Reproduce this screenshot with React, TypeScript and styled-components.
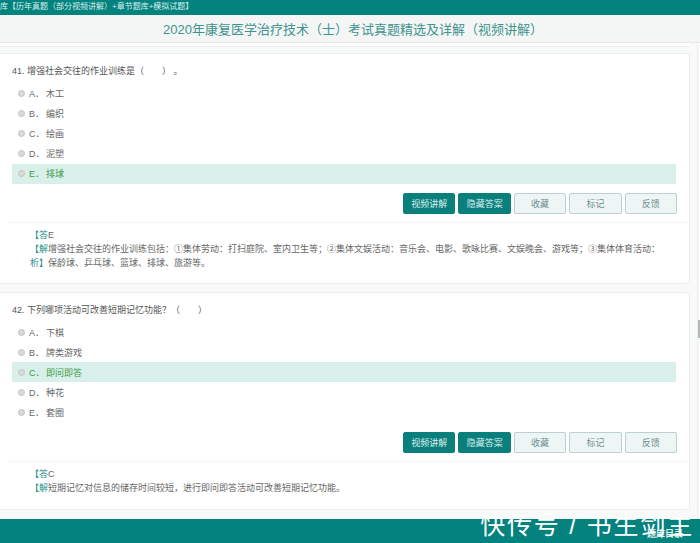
import styled, { createGlobalStyle } from "styled-components";

const questions = [
  {
    title: "41. 增强社会交往的作业训练是（　　） 。",
    options: [
      ["A．", "木工"],
      ["B．", "编织"],
      ["C．", "绘画"],
      ["D．", "泥塑"],
      ["E．", "排球"],
    ],
    correct: 4,
    answer: "E",
    analysisTag: "【解析】",
    analysis:
      "增强社会交往的作业训练包括：①集体劳动：打扫庭院、室内卫生等；②集体文娱活动：音乐会、电影、歌咏比赛、文娱晚会、游戏等；③集体体育活动：保龄球、乒乓球、篮球、排球、旅游等。",
  },
  {
    title: "42. 下列哪项活动可改善短期记忆功能？（　　）",
    options: [
      ["A．", "下棋"],
      ["B．", "牌类游戏"],
      ["C．", "即问即答"],
      ["D．", "种花"],
      ["E．", "套圈"],
    ],
    correct: 2,
    answer: "C",
    analysisTag: "【解",
    analysis: "短期记忆对信息的储存时间较短，进行即问即答活动可改善短期记忆功能。",
  },
];

const GlobalStyle = createGlobalStyle`
  html, body {
    margin: 0;
    padding: 0;
    height: 543px;
    overflow: hidden;
    background: #f8f9f9;
    font-family: "Liberation Sans", "Noto Sans CJK SC", sans-serif;
  }
`;

const Page = styled.div`
  position: relative;
  width: 700px;
  height: 543px;
  display: flex;
  flex-direction: column;
  overflow: hidden;
`;

const TopBar = styled.div`
  height: 15px;
  flex: none;
  background: #04827e;
  color: #d9efec;
  font-size: 8px;
  line-height: 13px;
  white-space: nowrap;
  overflow: hidden;
`;

const TitleBar = styled.h1`
  margin: 0;
  height: 28px;
  flex: none;
  box-sizing: border-box;
  background: #f4f6f6;
  border-bottom: 1px solid #e6e8e8;
  color: #3f9390;
  font-size: 13px;
  font-weight: 400;
  line-height: 29px;
  text-align: center;
  padding-left: 6px;
`;

const Body = styled.div`
  flex: 1;
  min-height: 0;
  display: flex;
`;

const Main = styled.div`
  width: 690px;
  flex: none;
  display: flex;
  flex-direction: column;
`;

const PreviousCardEnd = styled.div`
  height: 3px;
  flex: none;
  background: #fff;
  border-bottom: 1px solid #eceeee;
  margin-bottom: 6px;
`;

const CardList = styled.div`
  display: flex;
  flex-direction: column;
  gap: 8px;
`;

const ScrollTrack = styled.div`
  width: 3px;
  margin-left: 7px;
  flex: none;
  position: relative;
  background: #fbfbfb;
  border-left: 1px solid #eeeeee;
  box-sizing: border-box;
`;

const Thumb = styled.div`
  position: absolute;
  right: 0;
  top: 277px;
  width: 2px;
  height: 18px;
  background: #b4b8b8;
`;

const Card = styled.section<{ $height: number }>`
  height: ${(p) => p.$height}px;
  flex: none;
  box-sizing: border-box;
  background: #fff;
  border: 1px solid #eceeee;
  border-left: none;
  border-radius: 0 3px 3px 0;
  display: flex;
  flex-direction: column;
`;

const Question = styled.div`
  height: 29.5px;
  padding: 10px 0 0 12px;
  box-sizing: border-box;
  font-size: 9px;
  line-height: 15px;
  color: #555;
  flex: none;
`;

const Options = styled.div`
  display: flex;
  flex-direction: column;
  margin: 0 13px 0 12px;
  flex: none;
`;

const Option = styled.div<{ $correct: boolean }>`
  height: 20px;
  display: flex;
  align-items: center;
  padding-left: 6px;
  font-size: 9px;
  color: ${(p) => (p.$correct ? "#3e9a48" : "#666")};
  background: ${(p) => (p.$correct ? "#d9f0ea" : "transparent")};
`;

const Radio = styled.span`
  width: 7px;
  height: 7px;
  margin-right: 4px;
  flex: none;
  box-sizing: border-box;
  border-radius: 50%;
  background: #d8dada;
  border: 1px solid #c2c5c5;
`;

const OptionKey = styled.span`
  width: 17px;
  flex: none;
`;

const Actions = styled.div`
  display: flex;
  justify-content: flex-end;
  gap: 3px;
  padding: 9.5px 12px 8px 0;
  border-bottom: 1px solid #f4f5f5;
  margin-left: 8px;
  flex: none;
`;

const ActionButton = styled.button<{ $primary?: boolean }>`
  width: 52.4px;
  height: 21px;
  padding: 0;
  box-sizing: border-box;
  border-radius: 2px;
  font: inherit;
  font-size: 9px;
  border: 1px solid ${(p) => (p.$primary ? "#0b7f7c" : "#bcd1cf")};
  background: ${(p) => (p.$primary ? "#0b7f7c" : "#eef6f5")};
  color: ${(p) => (p.$primary ? "#d8eeec" : "#6f8f8d")};
`;

const Solution = styled.div`
  padding: 5px 25px 0 30px;
  font-size: 9px;
  line-height: 14px;
  color: #666;
`;

const Answer = styled.div``;

const Tag = styled.span`
  color: #1f8f8c;
`;

const Analysis = styled.div`
  display: grid;
  grid-template-columns: 18px 1fr;
`;

const Footer = styled.footer`
  height: 24px;
  flex: none;
  background: #04827e;
`;

const FooterLink = styled.span`
  position: absolute;
  right: 17px;
  bottom: 3px;
  color: #e4f4f2;
  font-size: 9px;
  font-weight: 700;
`;

const Watermark = styled.div`
  position: absolute;
  right: 6px;
  bottom: 3px;
  color: #fff;
  font-size: 25px;
  line-height: 30px;
  letter-spacing: 1.8px;
  white-space: nowrap;
`;

const App = () => {
  return (
    <Page>
      <GlobalStyle />
      <TopBar>库【历年真题（部分视频讲解）+章节题库+模拟试题】</TopBar>
      <TitleBar>2020年康复医学治疗技术（士）考试真题精选及详解（视频讲解）</TitleBar>
      <Body>
        <Main>
          <PreviousCardEnd />
          <CardList>
            {questions.map((q, i) => (
              <Card key={q.title} $height={i === 0 ? 230.6 : 218}>
                <Question>{q.title}</Question>
                <Options>
                  {q.options.map(([key, text], index) => (
                    <Option key={key} $correct={index === q.correct}>
                      <Radio />
                      <OptionKey>{key}</OptionKey>
                      {text}
                    </Option>
                  ))}
                </Options>
                <Actions>
                  <ActionButton $primary>视频讲解</ActionButton>
                  <ActionButton $primary>隐藏答案</ActionButton>
                  <ActionButton>收藏</ActionButton>
                  <ActionButton>标记</ActionButton>
                  <ActionButton>反馈</ActionButton>
                </Actions>
                <Solution>
                  <Answer>
                    <Tag>【答</Tag>
                    {q.answer}
                  </Answer>
                  <Analysis>
                    <Tag>{q.analysisTag}</Tag>
                    <span>{q.analysis}</span>
                  </Analysis>
                </Solution>
              </Card>
            ))}
          </CardList>
        </Main>
        <ScrollTrack>
          <Thumb />
        </ScrollTrack>
      </Body>
      <Footer />
      <FooterLink>题库目录</FooterLink>
      <Watermark>快传号 / 书生剑主</Watermark>
    </Page>
  );
};

export default App;
